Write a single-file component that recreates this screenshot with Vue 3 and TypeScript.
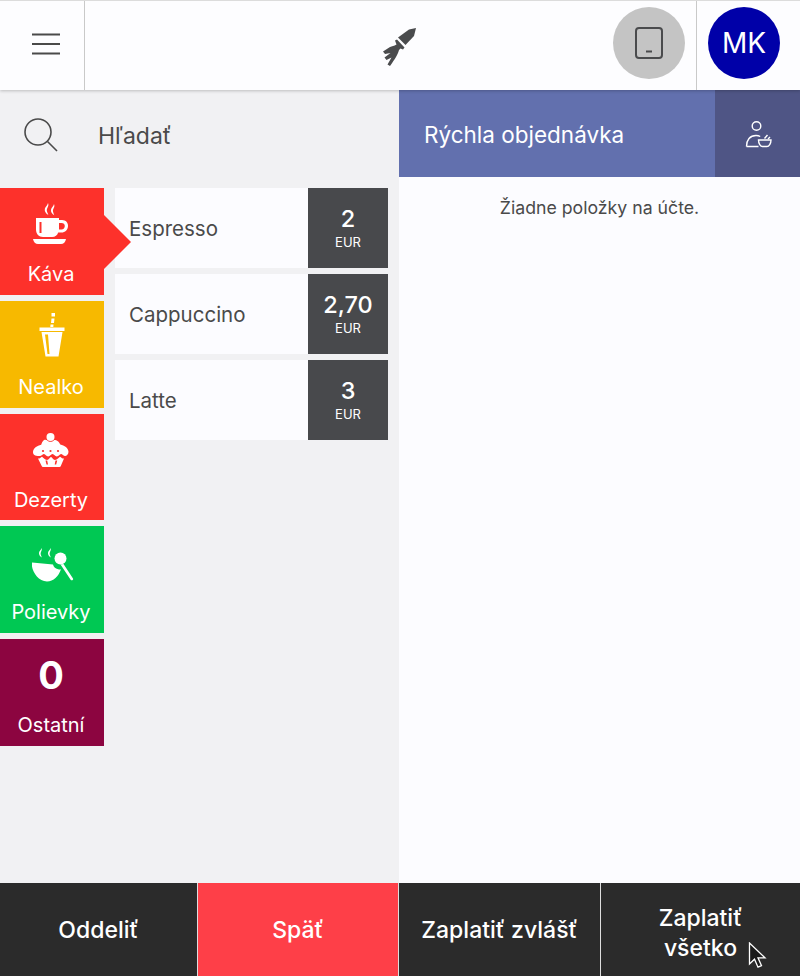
<script setup lang="ts">
interface Category {
  name: string
  color: string
  icon: string
  active?: boolean
}

interface Item {
  name: string
  price: string
}

const categories: Category[] = [
  { name: 'Káva', color: '#fd312b', icon: 'coffee', active: true },
  { name: 'Nealko', color: '#f7b900', icon: 'drink' },
  { name: 'Dezerty', color: '#fd312b', icon: 'cake' },
  { name: 'Polievky', color: '#00c853', icon: 'soup' },
  { name: 'Ostatní', color: '#8c0540', icon: 'zero' },
]

const items: Item[] = [
  { name: 'Espresso', price: '2' },
  { name: 'Cappuccino', price: '2,70' },
  { name: 'Latte', price: '3' },
]
</script>

<template>
  <div class="app">
    <header class="topbar">
      <button class="menu-btn" aria-label="Menu">
        <svg width="30" height="22" viewBox="0 0 30 22" fill="none" stroke="#4a4a4a" stroke-width="2.200">
          <path d="M1 1.500h28M1 11h28M1 20.500h28" />
        </svg>
      </button>
      <div class="logo">
        <svg width="60" height="60" viewBox="0 0 60 60" fill="#4a4b4d">
          <path d="M28 21.500 39 13.500 46 12 44 20 35.500 29z" />
          <path d="M25 24.500 27 23.500 34.500 31.500 33 33.500 30.500 32.500 29 34C28 38 25 43 20 50L17.500 48.500 21.500 41.500 16.500 44 14.500 41.500 20.500 37 15 38 13 35.500 20 31C22 30 24 30 26.500 28.500z" />
        </svg>
      </div>
      <div class="device">
        <svg width="30" height="34" viewBox="0 0 30 34" fill="none" stroke="#4a4b4d" stroke-width="2">
          <rect x="2" y="2" width="26" height="30" rx="3" />
          <path d="M12 25.500h6" />
        </svg>
      </div>
      <div class="user">
        <div class="avatar">MK</div>
      </div>
    </header>

    <main class="content">
      <section class="left">
        <div class="search">
          <svg class="search-icon" width="36" height="36" viewBox="0 0 36 36" fill="none" stroke="#4a4a4a" stroke-width="1.600">
            <circle cx="15" cy="15" r="13" />
            <path d="M24.500 24.500 34 34" />
          </svg>
          <span class="search-text">Hľadať</span>
        </div>
        <div class="menu">
          <nav class="categories">
            <div
              v-for="cat in categories"
              :key="cat.name"
              :class="['category', { active: cat.active }]"
              :style="{ background: cat.color, '--cat': cat.color }"
            >
              <div class="cat-icon">
                <svg v-if="cat.icon === 'coffee'" width="36" height="42" viewBox="0 0 36 42" fill="#fff" fill-rule="evenodd">
                  <path d="M3 15h23v2h3c4 0 6 2.800 6 6 0 3.800-3 6.500-6.500 6.500h-3.300c-1 2.800-3 4.500-6 4.500H10c-4.200 0-7-3-7-7.500zM6.500 19v11h2V19zM26 20v6.500h2.500c2 0 3.300-1.500 3.300-3.400 0-1.800-1.300-3.100-3.300-3.100z" />
                  <path d="M0 36h33c-.5 3-2.500 5-5 5H5c-2.500 0-4.500-2-5-5z" />
                  <path d="M15 0c1.600 3.500-2 5-1 8.500.4 1.500 1 2.300 1.400 3.500-2.800-1.700-4.200-3.900-3.500-6.500C12.400 3.600 14.700 2.300 15 0zM21 1c1.500 3.300-1.800 4.800-.9 8 .3 1.300.9 2.100 1.200 3.200-2.600-1.600-3.800-3.600-3.200-6 .4-1.800 2.600-3.100 2.900-5.200z" />
                </svg>
                <svg v-else-if="cat.icon === 'drink'" class="drink-icon" width="26" height="44" viewBox="0 0 26 44" fill="#fff">
                  <path d="M12.500 0h3.500v3.500h-3.500zM12.500 5.500h3L15 10h-3zM11.500 11.500h3l-.2 2.500h-3z" />
                  <path d="M.5 14.500h25v3.500H.5z" />
                  <path fill-rule="evenodd" d="M2.500 19h21L19.500 43.500h-13zM6 21.500l2.500 19.500h2L9 21.500z" />
                </svg>
                <svg v-else-if="cat.icon === 'cake'" width="36" height="34" viewBox="0 0 36 34" fill="#fff">
                  <circle cx="17.500" cy="4" r="4" />
                  <path d="M11 7c1.500-.6 2.500-.2 3 .3 2 2 5 2 7 0 1-.6 2.200-.2 3.500.6 1.500 1 2.300 2.400 2.800 3.600 4 1 8.200 3.500 8.200 7.300 0 2.700-2 4.400-3.700 4.200-1.700-.2-2.300-2-3.800-2s-2 2.500-4.200 2.500c-2 0-2.500-2.500-4.300-2.500s-2.300 2.500-4.300 2.500c-2.200 0-2.700-2.500-4.200-2.500s-2.100 1.800-3.800 2C1.900 23.200 0 21.700 0 19c0-3.800 4.200-6.300 8.200-7.300C8.700 10 9.700 8 11 7z" />
                  <path d="M5 25.500c1.500.2 2.800-1 4-1.800 1 .4 2.800 3.300 5 3.300 2 0 2.800-3 4-3s2 3 4 3c2.200 0 4-2.900 5-3.300 1.200.8 2.500 2 4 1.800L27.800 33c-.2.600-.7 1-1.300 1H10c-.6 0-1.100-.4-1.300-1zM12.500 27.500l1 4h1.500l-.8-4zm10 0-.8 4h1.500l1-4z" fill-rule="evenodd" />
                  <g fill="#fd312b">
                    <circle cx="10" cy="18" r="1.100" />
                    <circle cx="17.500" cy="18" r="1.100" />
                    <circle cx="25" cy="18" r="1.100" />
                  </g>
                </svg>
                <svg v-else-if="cat.icon === 'soup'" class="soup-icon" width="42" height="34" viewBox="0 0 42 34" fill="#fff">
                  <path d="M0 14.500 21 16.500c.5 2.500 2.500 4.500 6 5 .8 0 1.500 0 2-.2C26.500 28.500 21.500 33.500 15 33.500 7 33.500 1 25 0 18.500c-.2-1.300-.2-3 0-4z" />
                  <circle cx="28.500" cy="10.500" r="6" />
                  <path d="M31.500 16 41 30.500c.8 1.200-1.300 2.600-2.200 1.400L28.500 16.500z" />
                  <path d="M9.500 0c1.200 2.700-1.500 4-.7 6.700.3 1.200.8 2 1.100 2.800-2.200-1.400-3.300-3.200-2.800-5.300.3-1.400 2.200-2.400 2.400-4.200zM18.500 0c1.200 2.700-1.500 4-.7 6.700.3 1.200.8 2 1.100 2.800-2.200-1.400-3.300-3.200-2.800-5.300.3-1.400 2.200-2.400 2.400-4.200z" />
                </svg>
                <span v-else class="cat-zero">0</span>
              </div>
              <span class="cat-name">{{ cat.name }}</span>
            </div>
          </nav>
          <div class="items">
            <div v-for="item in items" :key="item.name" class="item">
              <span class="item-name">{{ item.name }}</span>
              <div class="price">
                <span class="amount">{{ item.price }}</span>
                <span class="currency">EUR</span>
              </div>
            </div>
          </div>
        </div>
      </section>

      <section class="right">
        <div class="order-head">
          <span class="order-title">Rýchla objednávka</span>
          <div class="waiter">
            <svg width="28" height="30" viewBox="0 0 28 30" fill="none" stroke="#fff" stroke-width="1.400">
              <circle cx="12.500" cy="7" r="4.300" />
              <path d="M2.500 27.500c0-6.500 3.500-11 9.500-11 1.500 0 3 .3 4.200 1M2.500 27.500h12" />
              <path d="M14.500 21h12.500c0 3.500-2 6.500-4 6.500h-4.500c-2 0-4-3-4-6.500z" />
              <path d="M20.500 19.500l3-3.500M24 20l2-2" />
            </svg>
          </div>
        </div>
        <p class="empty">Žiadne položky na účte.</p>
      </section>
    </main>

    <footer class="actions">
      <button class="action">Oddeliť</button>
      <button class="action back">Späť</button>
      <button class="action">Zaplatiť zvlášť</button>
      <button class="action pay-all">Zaplatiť<br />všetko</button>
      <svg class="cursor" width="20" height="28" viewBox="0 0 20 28">
        <path d="M1.500 1v21l5-4.800 3.500 8 3.500-1.500-3.500-7.900h7z" fill="#1b1b1b" stroke="#fff" stroke-width="1.300" />
      </svg>
    </footer>
  </div>
</template>

<style>
html,
body {
  margin: 0;
  background: #fcfcff;
}
</style>

<style scoped>
.app {
  position: relative;
  width: 800px;
  height: 976px;
  display: flex;
  flex-direction: column;
  overflow: hidden;
  font-family: Inter, 'Noto Sans', sans-serif;
  color: #4a4a4a;
  background: #fcfcff;
}

.topbar {
  position: relative;
  z-index: 1;
  height: 90px;
  flex-shrink: 0;
  display: flex;
  align-items: center;
  box-sizing: border-box;
  border-top: 1px solid #dcdcdc;
  background: #fdfdff;
  box-shadow: 0 1px 3px rgba(0, 0, 0, 0.22);
}

.menu-btn {
  width: 85px;
  height: 100%;
  padding: 0 0 4px 7px;
  display: flex;
  align-items: center;
  justify-content: center;
  background: none;
  border: 0;
  border-right: 1px solid #c9c9c9;
}

.logo {
  flex: 1;
  padding-left: 102px;
  display: flex;
  justify-content: center;
}

.device {
  width: 72px;
  height: 72px;
  margin: 0 11px 6px 0;
  border-radius: 50%;
  background: #c4c4c4;
  display: flex;
  align-items: center;
  justify-content: center;
}

.user {
  width: 104px;
  height: 100%;
  padding: 0 9px 6px 0;
  box-sizing: border-box;
  border-left: 1px solid #c9c9c9;
  display: flex;
  align-items: center;
  justify-content: center;
}

.avatar {
  width: 72px;
  height: 72px;
  border-radius: 50%;
  background: #0000a8;
  color: #fff;
  font-size: 28px;
  display: flex;
  align-items: center;
  justify-content: center;
}

.content {
  flex: 1;
  display: flex;
  min-height: 0;
}

.left {
  width: 399px;
  background: #f1f1f3;
}

.search {
  height: 88px;
  display: flex;
  align-items: center;
  padding-left: 23px;
}

.search-icon {
  margin-top: 2px;
}

.search-text {
  margin: 4px 0 0 39px;
  font-size: 23px;
}

.menu {
  margin-top: 10px;
  display: flex;
  gap: 11px;
}

.categories {
  width: 104px;
  display: flex;
  flex-direction: column;
  gap: 6px;
}

.category {
  position: relative;
  height: 106.750px;
  padding-right: 2px;
  box-sizing: border-box;
  color: #fff;
  display: flex;
  flex-direction: column;
  align-items: center;
}

.category.active::after {
  content: '';
  position: absolute;
  z-index: 1;
  left: 100%;
  top: 27px;
  border-left: 27px solid var(--cat);
  border-top: 27px solid transparent;
  border-bottom: 27px solid transparent;
}

.cat-icon {
  height: 66px;
  display: flex;
  align-items: center;
  justify-content: center;
  padding-top: 6px;
  box-sizing: border-box;
}

.drink-icon {
  margin: -4px 0 0 2px;
}

.soup-icon {
  margin: 5px 0 0 4px;
}

.cat-zero {
  font-size: 38px;
  font-weight: 700;
}

.cat-name {
  margin-top: 8px;
  font-size: 20px;
  line-height: 24px;
}

.items {
  width: 273px;
  display: flex;
  flex-direction: column;
  gap: 6px;
}

.item {
  height: 80px;
  display: flex;
  background: #fcfcff;
}

.item-name {
  flex: 1;
  padding-left: 14px;
  font-size: 20.500px;
  line-height: 81px;
}

.price {
  width: 80px;
  padding-bottom: 2px;
  box-sizing: border-box;
  background: #48494c;
  color: #fff;
  display: flex;
  flex-direction: column;
  align-items: center;
  justify-content: center;
}

.amount {
  font-size: 23.500px;
  font-weight: 500;
  line-height: 30px;
}

.currency {
  font-size: 13px;
  line-height: 16px;
}

.right {
  flex: 1;
  background: #fcfcff;
}

.order-head {
  height: 87px;
  display: flex;
  background: #6270ae;
  color: #fff;
}

.order-title {
  flex: 1;
  padding-left: 25px;
  font-size: 22.500px;
  line-height: 90px;
}

.waiter {
  width: 85px;
  background: #4f5585;
  display: flex;
  align-items: center;
  justify-content: center;
}

.empty {
  margin: 20px 0 0;
  text-align: center;
  font-size: 17.700px;
  line-height: 22px;
}

.actions {
  position: relative;
  height: 93px;
  flex-shrink: 0;
  display: grid;
  grid-template-columns: 197px 200px 201px 199px;
  column-gap: 1px;
  background: #dedede;
}

.action {
  padding: 0;
  border: 0;
  background: #2b2b2b;
  color: #fff;
  font-family: inherit;
  font-size: 23px;
  font-weight: 500;
  line-height: 30px;
}

.action.back {
  background: #fe3f48;
}

.action.pay-all {
  padding-top: 6px;
}

.cursor {
  position: absolute;
  left: 748px;
  top: 59px;
}
</style>
